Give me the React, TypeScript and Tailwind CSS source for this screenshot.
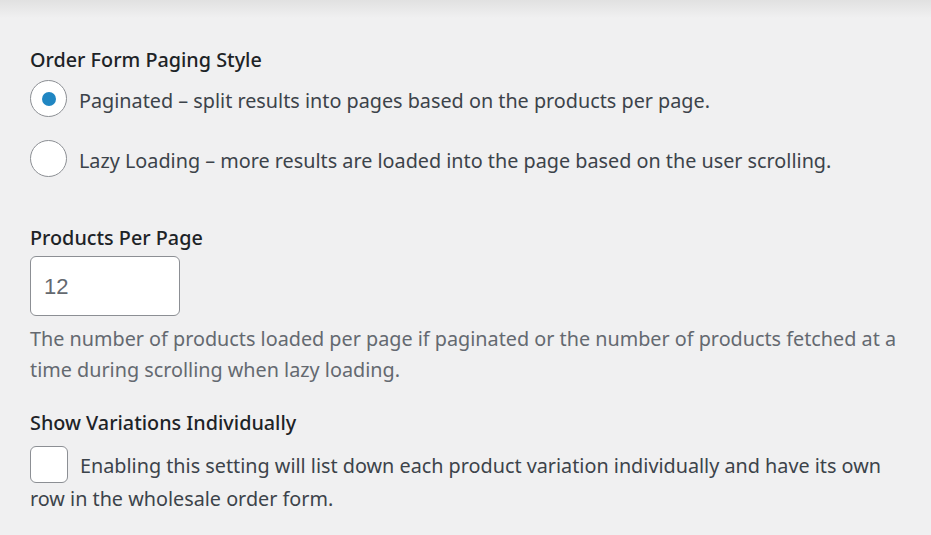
import { FC } from "react";

const font = { fontFamily: '"Noto Sans", "Open Sans", sans-serif' };

const Radio: FC<{ checked?: boolean; label: string }> = ({ checked, label }) => (
  <label className="flex items-center gap-[12px] h-[37px]">
    <span className="w-[37px] h-[37px] shrink-0 rounded-full border border-[#8c8f94] bg-white flex items-center justify-center">
      {checked && <span className="w-[14px] h-[14px] rounded-full bg-[#2086c2]" />}
    </span>
    <span className="text-[#3c434a] pt-[3px]">{label}</span>
  </label>
);

export default function App() {
  return (
    <div
      className="w-[931px] h-[535px] bg-[#f0f0f1] overflow-hidden text-[19.8px] leading-[31px]"
      style={font}
    >
      <div className="h-[18px] bg-gradient-to-b from-[#e1e1e1] to-[#f0f0f1]" />
      <div className="pl-[30px] pr-[14px] pt-[26px]">
        <p className="font-medium text-[#1d2327]">Order Form Paging Style</p>
        <div className="mt-[5px] flex flex-col gap-[23px]">
          <Radio checked label="Paginated – split results into pages based on the products per page." />
          <Radio label="Lazy Loading – more results are loaded into the page based on the user scrolling." />
        </div>

        <p className="mt-[45px] font-medium text-[#1d2327]">Products Per Page</p>
        <div className="mt-[3px] w-[150px] h-[60px] rounded-[6px] border border-[#8c8f94] bg-white flex items-center px-[13px] text-[22px] text-[#646970] font-['Liberation_Sans',sans-serif]">
          12
        </div>
        <p className="mt-[7px] text-[#646970]">
          The number of products loaded per page if paginated or the number of products fetched at a time during scrolling when lazy loading.
        </p>

        <p className="mt-[22px] font-medium text-[#1d2327]">Show Variations Individually</p>
        <div className="mt-[8px] text-[#3c434a]">
          <span className="inline-block align-[-10px] w-[38px] h-[37px] rounded-[6px] border border-[#8c8f94] bg-white mr-[12px]" />
          Enabling this setting will list down each product variation individually and have its own row in the wholesale order form.
        </div>
      </div>
    </div>
  );
}
